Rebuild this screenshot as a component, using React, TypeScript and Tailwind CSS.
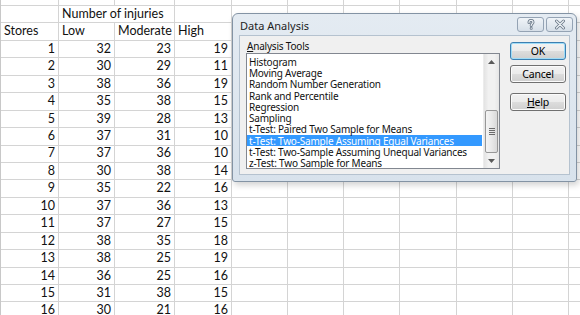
import React, { type FC } from 'react';

type DataRow = readonly [number, number, number, number];

const dataRows: ReadonlyArray<DataRow> = [
  [1, 32, 23, 19],
  [2, 30, 29, 11],
  [3, 38, 36, 19],
  [4, 35, 38, 15],
  [5, 39, 28, 13],
  [6, 37, 31, 10],
  [7, 37, 36, 10],
  [8, 30, 38, 14],
  [9, 35, 22, 16],
  [10, 37, 36, 13],
  [11, 37, 27, 15],
  [12, 38, 35, 18],
  [13, 38, 25, 19],
  [14, 36, 25, 16],
  [15, 31, 38, 15],
  [16, 30, 21, 16],
];

const tools: ReadonlyArray<string> = [
  'Histogram',
  'Moving Average',
  'Random Number Generation',
  'Rank and Percentile',
  'Regression',
  'Sampling',
  't-Test: Paired Two Sample for Means',
  't-Test: Two-Sample Assuming Equal Variances',
  't-Test: Two-Sample Assuming Unequal Variances',
  'z-Test: Two Sample for Means',
];

const SELECTED = 7;
const COLS = 11;

const cellBase =
  'border-r border-b border-[#d4d4d4] px-[3px] pb-[2px] flex items-end leading-none whitespace-nowrap';

const Cell: FC<{ text?: string | number; right?: boolean; span?: boolean }> = ({ text, right, span }) => (
  <div className={`${cellBase} ${right ? 'justify-end' : 'justify-start'} ${span ? 'col-span-2' : ''}`}>
    {text ?? ''}
  </div>
);

const blanks = (n: number, key: string) =>
  Array.from({ length: n }, (_, i) => <Cell key={`${key}-${i}`} />);

const Sheet: FC = () => (
  <div
    className="grid grid-cols-[58px_56px_60px_57px_56px_56px_56px_57px_56px_56px_12px] grid-rows-[6px] auto-rows-[17.45px] border-l border-[#c8c8c8] text-[12.5px] text-[#111]"
    style={{ fontFamily: 'Lato, "Liberation Sans", sans-serif' }}
  >
    {blanks(COLS, 'top')}
    <Cell />
    <Cell text="Number of injuries" span />
    {blanks(COLS - 3, 'hdr1')}
    <Cell text="Stores" />
    <Cell text="Low" />
    <Cell text="Moderate" />
    <Cell text="High" />
    {blanks(COLS - 4, 'hdr2')}
    {dataRows.map((r) => (
      <React.Fragment key={r[0]}>
        {r.map((v, i) => (
          <Cell key={i} text={v} right />
        ))}
        {blanks(COLS - 4, `row${r[0]}`)}
      </React.Fragment>
    ))}
  </div>
);

const winBtn =
  'border rounded-[3px] bg-[linear-gradient(#f2f2f2,#ebebeb_50%,#dddddd_50%,#cfcfcf)] flex items-center justify-center text-black leading-none';

const HollowIcon: FC<{ d: string }> = ({ d }) => (
  <svg width="12" height="11" viewBox="0 0 12 11" fill="none">
    <path d={d} stroke="#6f7d8c" strokeWidth="3" strokeLinecap="round" strokeLinejoin="round" />
    <path d={d} stroke="#eef2f6" strokeWidth="1.2" strokeLinecap="round" strokeLinejoin="round" />
  </svg>
);

const Arrow: FC<{ up?: boolean }> = ({ up }) => (
  <svg width="7" height="4" viewBox="0 0 7 4">
    <path d={up ? 'M0 4L3.5 0L7 4Z' : 'M0 0L3.5 4L7 0Z'} fill="#5a5a5a" />
  </svg>
);

const DataAnalysisDialog: FC = () => (
  <div
    className="absolute left-[232px] top-[13px] w-[345px] h-[169px] rounded-t-[6px] rounded-b-[3px] border border-[#8393a4] bg-[linear-gradient(#e4ebf2,#d8e2ec)] flex flex-col shadow-[2px_3px_6px_rgba(0,0,0,0.18)] text-[10px] tracking-[-0.2px] text-[#111]"
    style={{ fontFamily: '"Noto Sans", "Open Sans", sans-serif' }}
  >
    {/* title bar */}
    <div className="h-[21px] flex justify-between pl-[7px] pr-[3px] shrink-0">
      <span className="text-[11px] tracking-normal text-[#1e1e1e] self-center leading-none pt-[1px]">Data Analysis</span>
      <div className="flex gap-[2px] mt-[3px]">
        <div className="w-[27px] h-[15px] rounded-[3px] border border-[#94a3b4] bg-[linear-gradient(#f0f4f8,#d6dfe8)] flex items-center justify-center">
          <HollowIcon d="M4 3.6C4 2 5 1.4 6 1.4C7.2 1.4 8 2.2 8 3.3C8 4.6 6.2 4.8 6.2 6.4M6.2 9.2L6.2 9.3" />
        </div>
        <div className="w-[27px] h-[15px] rounded-[3px] border border-[#94a3b4] bg-[linear-gradient(#f0f4f8,#d6dfe8)] flex items-center justify-center">
          <HollowIcon d="M2.5 2L9.5 9M9.5 2L2.5 9" />
        </div>
      </div>
    </div>

    {/* body */}
    <div className="flex-1 mx-[6px] mb-[6px] bg-[#f0f0f0] border border-[#b5c2cf] flex">
      <div className="flex flex-col pl-[6px] pt-[2px]">
        <div className="h-[15px] flex items-center ml-[1px] leading-none">
          <span>
            <span className="underline underline-offset-[1px]">A</span>nalysis Tools
          </span>
        </div>
        <div className="w-[254px] h-[116px] border border-[#828790] bg-white flex">
          <div className="flex-1 pt-[2px] pr-[1px] overflow-hidden">
            {tools.map((t, i) => (
              <div
                key={t}
                className={`h-[11.3px] pl-[2px] flex items-center leading-none whitespace-nowrap ${
                  i === SELECTED ? 'bg-[#3399ff] text-white' : ''
                }`}
              >
                {t}
              </div>
            ))}
          </div>
          <div className="w-[16px] flex flex-col bg-[linear-gradient(90deg,#e3e3e3,#f1f1f1_30%,#f1f1f1_70%,#e6e6e6)] border-l border-[#ececec]">
            <div className="h-[16px] flex items-center justify-center">
              <Arrow up />
            </div>
            <div className="flex-1 flex flex-col">
              <div className="h-[40px]" />
              <div className="h-[43px] mx-[1px] rounded-[2px] border border-[#979797] bg-[linear-gradient(90deg,#f4f4f4,#e9e9e9_50%,#d9d9d9)] flex flex-col items-center justify-center gap-[1px]">
                <div className="w-[6px] h-px bg-[#6b6b6b]" />
                <div className="w-[6px] h-px bg-[#6b6b6b]" />
                <div className="w-[6px] h-px bg-[#6b6b6b]" />
                <div className="w-[6px] h-px bg-[#6b6b6b]" />
              </div>
            </div>
            <div className="h-[15px] flex items-center justify-center">
              <Arrow />
            </div>
          </div>
        </div>
      </div>

      <div className="flex flex-col ml-[10px] pt-[6px] text-[10.5px]">
        <div className={`${winBtn} w-[56px] h-[18px] border-[#3c7fb1] shadow-[inset_0_0_0_1px_#9fdcf7]`}>OK</div>
        <div className={`${winBtn} w-[56px] h-[18px] mt-[5px] border-[#707070] shadow-[inset_0_0_0_1px_#fbfbfb]`}>
          Cancel
        </div>
        <div className={`${winBtn} w-[56px] h-[18px] mt-[10px] border-[#707070] shadow-[inset_0_0_0_1px_#fbfbfb]`}>
          <span>
            <span className="underline underline-offset-[1px]">H</span>elp
          </span>
        </div>
      </div>
    </div>
  </div>
);

const App: FC = () => (
  <div className="relative w-[580px] h-[315px] overflow-hidden bg-white">
    <Sheet />
    <DataAnalysisDialog />
  </div>
);

export default App;
